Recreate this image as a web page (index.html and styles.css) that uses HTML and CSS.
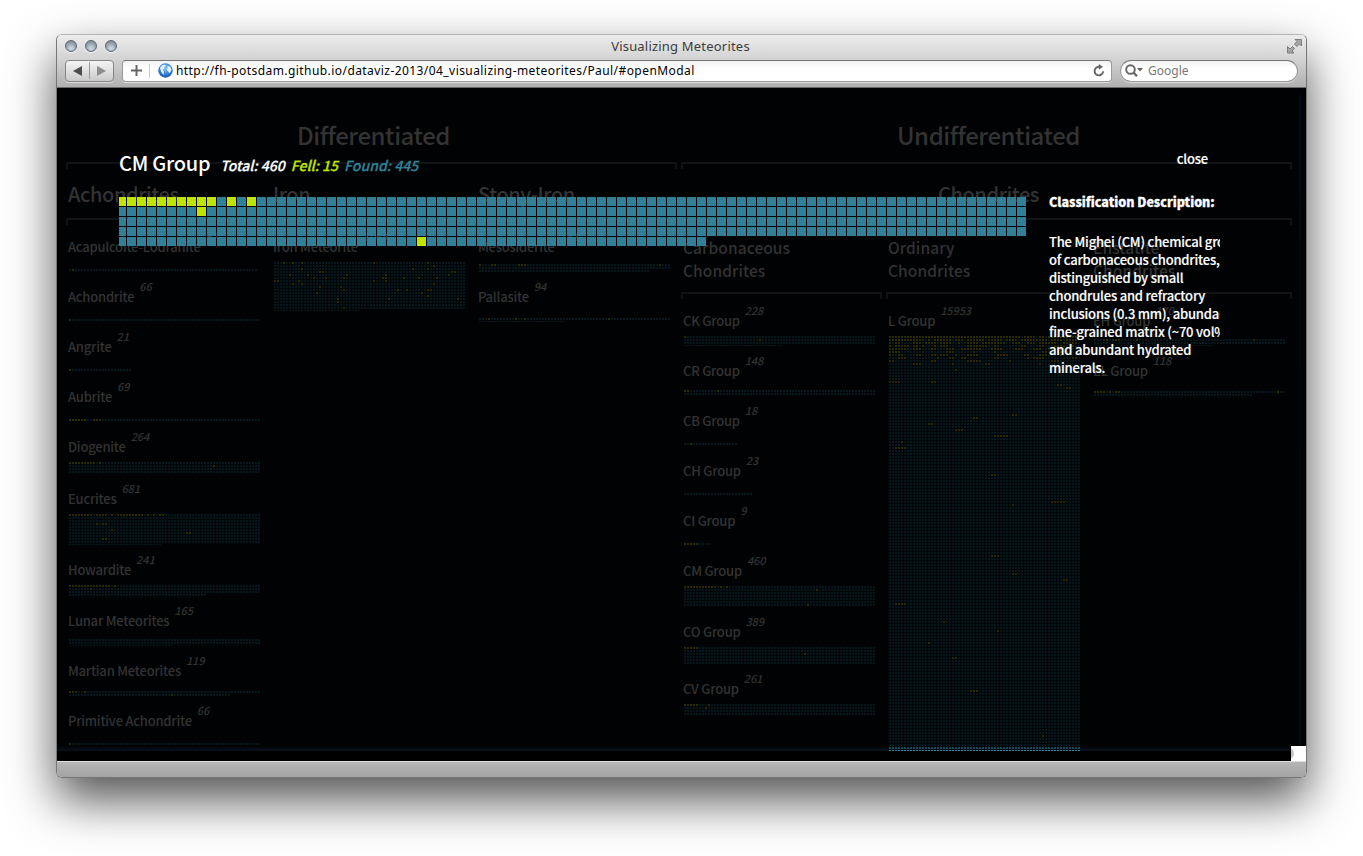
FILE: index.html
```html
<!DOCTYPE html>
<html lang="en">
<head>
<meta charset="utf-8">
<title>Visualizing Meteorites</title>
<link rel="stylesheet" href="styles.css">
</head>
<body>
<div class="window">
  <header class="chrome">
    <div class="titlebar">
      <div class="lights"><i></i><i></i><i></i></div>
      <span class="window-title">Visualizing Meteorites</span>
      <svg class="fullscreen" width="15" height="15" viewBox="0 0 15 15" fill="#a5a5a5" stroke="#7d7d7d" stroke-width="1"><path d="M8 .5h6.500v6.500l-2-2-2.500 2.500-2.500-2.500L10 2.500z"/><path d="M.5 7.500v6.500h6.500l-2-2 2.500-2.500L5.500 7.500 3 10z"/></svg>
    </div>
    <div class="toolbar">
      <div class="nav">
        <svg width="49" height="22" viewBox="0 0 49 22"><path d="M8 11l9-5v10z" fill="#4d4d4d"/><path d="M41 11l-9-5v10z" fill="#8c8c8c"/><path d="M24.500 2v17" stroke="#9a9a9a"/></svg>
      </div>
      <div class="address">
        <svg class="plus" width="11" height="11" viewBox="0 0 11 11" stroke="#666" stroke-width="2"><path d="M5.500 0v11M0 5.500h11"/></svg>
        <i class="divider"></i>
        <svg class="globe" width="15" height="15" viewBox="0 0 15 15">
          <defs><radialGradient id="sea" cx=".5" cy=".35" r=".65"><stop offset="0" stop-color="#86c4fa"/><stop offset=".7" stop-color="#2c79d4"/><stop offset="1" stop-color="#1b4d9b"/></radialGradient></defs>
          <circle cx="7.500" cy="7.500" r="7.200" fill="url(#sea)"/>
          <path d="M2 4.500Q4 1.500 7 1.500l1 1.500-2 1 .5 1.500-2 1.500 1.500 1.500-.5 3.500L3 8.500zM9.500 2.500l3 1.500 1 3-2 3.500-1.500-2.500L8.500 7l1-1.500z" fill="#e2f3ff"/>
        </svg>
        <span class="url">http://fh-potsdam.github.io/dataviz-2013/04_visualizing-meteorites/Paul/#openModal</span>
        <svg class="reload" width="12" height="13" viewBox="0 0 12 13" fill="none" stroke="#666" stroke-width="1.900"><path d="M10.200 7.300A4.300 4.300 0 1 1 6.500 2.800"/><path d="M5.800 0l4.200 2.800-4.200 3z" fill="#666" stroke="none"/></svg>
      </div>
      <div class="search">
        <svg width="19" height="14" viewBox="0 0 19 14" fill="none" stroke="#666" stroke-width="1.900"><circle cx="5.500" cy="5.500" r="4.300"/><path d="M8.700 8.700L12 12.300" stroke-width="2.400"/><path d="M12 4h6l-3 3.500z" fill="#666" stroke="none"/></svg>
        <span>Google</span>
      </div>
    </div>
  </header>

  <main class="viewport">
    <div class="chart">
      <section class="kind">
        <h1>Differentiated</h1>
        <div class="bracket"></div>
        <div class="classes">
          <section class="class"><h2>Achondrites</h2><div class="bracket"></div><div class="list" data-list="achondrites"></div></section>
          <section class="class"><h2>Iron</h2><div class="bracket"></div><div class="list" data-list="iron"></div></section>
          <section class="class"><h2>Stony-Iron</h2><div class="bracket"></div><div class="list" data-list="stony"></div></section>
        </div>
      </section>
      <section class="kind">
        <h1>Undifferentiated</h1>
        <div class="bracket"></div>
        <h2 class="centered">Chondrites</h2>
        <div class="bracket"></div>
        <div class="classes">
          <section class="class"><h3>Carbonaceous<br>Chondrites</h3><div class="bracket"></div><div class="list" data-list="carbonaceous"></div></section>
          <section class="class"><h3>Ordinary<br>Chondrites</h3><div class="bracket"></div><div class="list" data-list="ordinary"></div></section>
          <section class="class"><h3>Enstatite<br>Chondrites</h3><div class="bracket"></div><div class="list" data-list="enstatite"></div></section>
        </div>
      </section>
    </div>

    <div class="scroll-v"></div>
    <div class="scroll-h"></div>
    <div class="bright-row"></div>
    <div class="corner"><i></i></div>

    <div class="modal">
      <div class="modal-main">
        <div class="modal-head">
          <span class="modal-title">CM Group</span>
          <span class="stat total">Total: 460</span>
          <span class="stat fell">Fell: 15</span>
          <span class="stat found">Found: 445</span>
        </div>
        <div class="modal-grid"></div>
      </div>
      <aside class="modal-side">
        <div class="close">close</div>
        <h4>Classification Description:</h4>
        <p>The Mighei (CM) chemical group<br>of carbonaceous chondrites,<br>distinguished by small<br>chondrules and refractory<br>inclusions (0.3 mm), abundant<br>fine-grained matrix (~70 vol%)<br>and abundant hydrated<br>minerals.</p>
      </aside>
    </div>
  </main>
  <footer class="statusbar"></footer>
</div>
<script src="app.js"></script>
</body>
</html>
```
FILE: styles.css
```css
* { box-sizing: border-box; }
html, body { margin: 0; height: 100%; overflow: hidden; background: #fff; }
body { font-family: "Noto Sans CJK SC", "Noto Sans", sans-serif; padding: 34px 56px 0; }
h1, h2, h3, h4, p { margin: 0; font-weight: 500; }
svg { display: block; flex: none; }

.window {
  width: 1251px; height: 744px; border: 1px solid #777; border-top-color: #b5b5b5;
  border-radius: 6px; overflow: hidden; display: flex; flex-direction: column;
  box-shadow: 0 22px 48px rgba(0,0,0,.68);
}
.chrome {
  height: 53px; flex: none; background: linear-gradient(#ececec, #d4d4d4 45%, #b0b0b0);
  border-bottom: 1px solid #6a6a6a; font-family: "Noto Sans", "DejaVu Sans", sans-serif;
}
.titlebar { height: 22px; display: flex; align-items: center; padding: 0 4px 0 8px; }
.lights { display: flex; gap: 8px; width: 60px; }
.lights i {
  width: 12px; height: 12px; border-radius: 50%; border: 1px solid #5c656e;
  background: radial-gradient(circle at 50% 75%, #d2dce5, #93a0ad 60%, #76828e);
  box-shadow: 0 1px 0 #f3f3f3;
}
.window-title { flex: 1; text-align: center; font-size: 13px; line-height: 22px; color: #3c3c3c; letter-spacing: .2px; padding-right: 66px; }
.fullscreen { margin-left: -15px; }
.toolbar { display: flex; align-items: center; padding: 2px 8px 0; height: 25px; }
.nav { width: 49px; height: 22px; border: 1px solid #858585; border-radius: 4px; background: linear-gradient(#f5f5f5, #cacaca); box-shadow: 0 1px 0 #ddd; }
.nav svg { margin: -1px; }
.address {
  margin-left: 8px; width: 990px; height: 22px; display: flex; align-items: center; padding: 0 6px 0 8px;
  background: linear-gradient(#f3f3f3, #fff 40%); border: 1px solid #999; border-top-color: #777; border-radius: 4px; box-shadow: 0 1px 0 #ddd;
}
.divider { width: 1px; height: 14px; background: #ccc; margin: 0 8px 0 7px; }
.url { flex: 1; font-size: 12px; line-height: 20px; color: #000; white-space: nowrap; margin-left: 3px; letter-spacing: .43px; }
.search {
  margin-left: 8px; width: 178px; height: 22px; display: flex; align-items: center; gap: 4px; padding-left: 4px;
  background: linear-gradient(#f3f3f3, #fff 40%); border: 1px solid #999; border-top-color: #777; border-radius: 11px; box-shadow: 0 1px 0 #ddd;
  font-size: 12px; color: #777;
}

.viewport { position: relative; height: 673px; flex: none; background: #000203; overflow: hidden; }
.chart { display: flex; gap: 4px; width: 1226px; margin-left: 9px; padding-top: 28px; color: #333; }
.kind { width: 611px; }
.kind h1 { font-size: 24px; line-height: 38px; height: 46px; text-align: center; padding-left: 4px; letter-spacing: -.45px; }
.bracket { height: 7px; border: 2px solid #111214; border-bottom: 0; }
.classes { display: grid; grid-template-columns: repeat(3, 201px); gap: 4px; }
.class h2, .centered { font-size: 20px; line-height: 30px; height: 49px; padding: 10px 0 0 2px; letter-spacing: -.4px; }
.centered { text-align: center; padding-left: 4px; }
.class h3 { font-size: 15.500px; line-height: 23px; height: 67px; padding: 11px 0 0 2px; letter-spacing: .08px; }
.list { padding-top: 10px; height: 550px; }
.item-name { font-size: 13px; line-height: 24px; height: 24px; padding-left: 2px; white-space: nowrap; font-weight: 500; letter-spacing: -.22px; }
.item-name em { font-size: 11px; position: relative; top: -11px; margin-left: 5px; letter-spacing: -.1px; }
.dots { margin-left: 3px; shape-rendering: crispEdges; }
.dots .d { fill: #05181d; }
.dots .f { fill: #2a2c00; }

.scroll-v { position: absolute; left: 1242px; top: 7px; width: 2px; height: 651px; background: linear-gradient(#020918, #01040c 50%, #030c15); }
.scroll-h { position: absolute; left: 0; top: 659px; width: 1234px; height: 4px; background: linear-gradient(#02060c, #08111e); }
.bright-row { position: absolute; left: 832px; top: 659px; width: 192px; height: 4px; background: linear-gradient(#164552 0 1px, #1b5262 1px 2px, #000203 2px 3px, #3687a1 3px); -webkit-mask: repeating-linear-gradient(90deg, #000 0 2px, transparent 2px 3px); }
.viewport::after { content: ""; position: absolute; left: 0; right: 15px; bottom: 0; height: 10px; background: #000; }
.corner { position: absolute; right: 0; bottom: 0; width: 15px; height: 15px; background: #fff; overflow: hidden; z-index: 2; }
.corner i { position: absolute; left: -8px; top: 2px; width: 11px; height: 11px; border-radius: 6px; background: #c4c4c4; }

.modal { position: absolute; left: 62px; top: 55px; width: 1101px; display: flex; justify-content: space-between; z-index: 1; color: #fff; }
.modal-head { height: 54px; line-height: 40px; display: flex; align-items: baseline; white-space: nowrap; }
.modal-title { font-size: 20px; font-weight: 500; margin-right: 10px; letter-spacing: -.25px; }
.stat { font-size: 14px; font-weight: 700; font-style: italic; margin-right: 6px; letter-spacing: -.35px; }
.total { font-weight: 500; letter-spacing: 0; }
.fell { color: #c0e600; }
.found { color: #31819b; font-weight: 500; letter-spacing: .05px; }
.fell { font-weight: 500; letter-spacing: 0; }
.stat { -webkit-text-stroke: .25px currentColor; }
.modal-grid { width: 907px; overflow: hidden; }
.modal-grid svg { shape-rendering: crispEdges; opacity: .98; }
.modal-grid .d { fill: #31839d; }
.modal-grid .f { fill: #c2e900; }
.modal-side { width: 171px; overflow: hidden; font-size: 13px; line-height: 18px; white-space: nowrap; font-weight: 500; letter-spacing: -.2px; -webkit-text-stroke: .15px currentColor; }
.close { text-align: right; padding: 7px 12px 0 0; }
.modal-side h4 { font-size: 12.500px; font-weight: 900; margin-top: 25px; letter-spacing: 0; -webkit-text-stroke: .3px currentColor; }
.modal-side p { margin-top: 22px; }

.statusbar { flex: 1; border-top: 1px solid #ddd; background: linear-gradient(#b6b6b6, #a3a3a3); }
```
FILE: app.js
```js
// [name, count, gap above dots, block height, full rows, cells in last row, last row height, fell "row:cols"]
const data = {
  achondrites: [
    ["Acapulcoite-Lodranite", 57, 10, 50, 0, 63, 2, "0:1"],
    ["Achondrite", 66, 10, 50, 1, 0, 2, "0:0"],
    ["Angrite", 21, 10, 50, 0, 21, 2, "0:0"],
    ["Aubrite", 69, 10, 50, 1, 0, 2, "0:0-5,8-10"],
    ["Diogenite", 264, 3, 52, 4, 0, 2, "0:0-8,10 1:48"],
    ["Eucrites", 681, 3, 71, 10, 31, 1, "0:0-7,9-12,14,16-24,26,28,30-31 3:9,11-12 5:14 6:39-40 8:11-12"],
    ["Howardite", 241, 3, 51, 3, 46, 2, "0:0-13,15 1:7"],
    ["Lunar Meteorites", 165, 6, 50, 2, 35, 1, ""],
    ["Martian Meteorites", 119, 8, 50, 1, 54, 2, "0:0-2,5 1:34"],
    ["Primitive Achondrite", 66, 10, 50, 1, 0, 2, "0:0"]
  ],
  iron: [
    ["Iron Meteorite", 1064, 3, 80, 16, 29, 1, "0:3,6,9,33,51 1:53 2:9,46,51 3:15-16,59-60 4:5,11,24,37,58 5:13,17,23,36-37,43,48,54 6:0-1,8,33,37 7:6,9,53 8:15,22 9:23,41,44,51-52 10:14,49 11:51 12:21,38,61 13:21 15:23"]
  ],
  stony: [
    ["Mesosiderite", 181, 5, 50, 2, 57, 2, "0:0,4-5,13-15,60"],
    ["Pallasite", 94, 9, 50, 1, 29, 1, "0:3,12,15,43"]
  ],
  carbonaceous: [
    ["CK Group", 228, 3, 50, 3, 33, 1, "0:0 1:25"],
    ["CR Group", 148, 7, 50, 2, 0, 2, "0:0-1,11"],
    ["CB Group", 18, 10, 50, 0, 18, 2, "0:2"],
    ["CH Group", 23, 10, 50, 0, 23, 2, ""],
    ["CI Group", 9, 10, 50, 0, 9, 2, "0:0-4"],
    ["CM Group", 460, 3, 61, 7, 0, 2, "0:0-10,12,14 1:44 6:41"],
    ["CO Group", 389, 3, 57, 6, 0, 2, "0:0-4 2:40"],
    ["CV Group", 261, 3, 50, 4, 0, 2, "0:0-4,8 1:7"]
  ],
  ordinary: [
    ["L Group", 15953, 3, 460, 139, 0, 2, "0:0-43,45-48,50-51,53-63 1:0-11,13,15-20,22-24,26-31,33-37,39-42,44-52,54-57,59-62 2:0,2-3,8-10,12-15,17-20,23,26-29,31-38,41-43,46-48,50-55,58-62 3:0,2-6,8-9,11,15,17-19,26-32,35-36,44-45,50-51,55-58,61 4:0-5,8-10,14-15,19-21,24-30,34-37,42-44,48-50,53-57 5:0-3,19-21,28,35,51-52,56-60 6:0,3-4,9-10,14-15,17-19,22,26-29,36-39,45-46,50-52,57 7:3-5,16,20-21,24-25,35-36,46,48-51,61-62 8:0-1,14-15,26-30,40,54-56 9:8-10,21,32-33,50 11:22 15:0-3,14-15 16:56-57 17:59-60 26:41-42 27:28-29 29:13-14 31:22-24 33:35-39 35:4 37:2-5 46:34-35 55:54-58 56:41 73:34-36 79:41-42 81:58-59 89:2-5 95:18 98:36 102:13 107:21-22 118:27-29 133:51"]
  ],
  enstatite: [
    ["EH Group", 170, 6, 50, 2, 40, 1, "0:3-4,6-8,14,53"],
    ["EL Group", 118, 8, 50, 1, 53, 2, "0:0-3,5,7-8,61"]
  ]
};

function parseFell(text) {
  const cells = new Set();
  text.split(" ").filter(Boolean).forEach(part => {
    const [row, cols] = part.split(":");
    cols.split(",").forEach(range => {
      const [a, b = a] = range.split("-").map(Number);
      for (let c = a; c <= b; c++) cells.add(row + "," + c);
    });
  });
  return cells;
}

// One path per state keeps large grids light.
function grid(cols, full, rest, pitch, size, lastHeight, fellText, shift, cls) {
  const fell = parseFell(fellText);
  const rows = full + (rest ? 1 : 0);
  let found = "", hit = "";
  for (let r = 0; r < rows; r++) {
    const n = r < full ? cols : rest;
    const h = r < full ? size : lastHeight;
    for (let c = 0; c < n; c++) {
      const cell = `M${c * pitch - shift} ${r * pitch}h${size}v${h}h-${size}z`;
      if (fell.has(r + "," + c)) hit += cell; else found += cell;
    }
  }
  return `<svg class="${cls}" width="${cols * pitch}" height="${rows * pitch}"><path class="d" d="${found}"/><path class="f" d="${hit}"/></svg>`;
}

document.querySelectorAll("[data-list]").forEach(list => {
  list.innerHTML = data[list.dataset.list].map(([name, count, gap, height, full, rest, last, fell]) =>
    `<div class="item" style="height:${height}px"><div class="item-name" style="margin-bottom:${gap}px">${name}<em>${count}</em></div>${grid(64, full, rest, 3, 2, last, fell, 0, "dots")}</div>`
  ).join("");
});

document.querySelector(".modal-grid").innerHTML =
  grid(91, 4, 59, 10, 9, 9, "0:0-9,11,13 1:8 4:30", 2, "cells");
```
